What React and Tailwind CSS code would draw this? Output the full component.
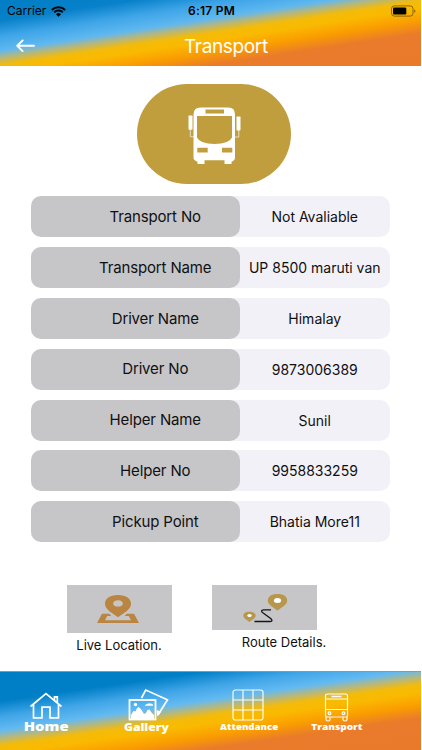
const details = [
  { label: "Transport No", value: "Not Avaliable" },
  { label: "Transport Name", value: "UP 8500 maruti van" },
  { label: "Driver Name", value: "Himalay" },
  { label: "Driver No", value: "9873006389" },
  { label: "Helper Name", value: "Sunil" },
  { label: "Helper No", value: "9958833259" },
  { label: "Pickup Point", value: "Bhatia More11" },
];

function StatusBar() {
  return (
    <div className="flex h-[22px] items-center justify-between pl-[7px] pr-[5px] text-black">
      <div className="flex w-[120px] items-center gap-[4.5px]">
        <span className="text-[12px] leading-none">Carrier</span>
        <svg className="h-[11px] w-[15px]" viewBox="0 0 15 11" fill="none" stroke="currentColor">
          <path d="M0.8 3.9a9.6 9.6 0 0 1 13.4 0" strokeWidth="2.1" />
          <path d="M3.2 6.3a6.1 6.1 0 0 1 8.6 0" strokeWidth="2" />
          <path d="M7.5 10.8L5 8.2a3.6 3.6 0 0 1 5 0z" fill="currentColor" stroke="none" />
        </svg>
      </div>
      <span className="text-[12px] font-semibold leading-none tracking-[0.25px]">6:17 PM</span>
      <div className="flex w-[120px] justify-end">
        <svg className="h-[12px] w-[25px]" viewBox="0 0 25 12" fill="none">
          <rect x="0.5" y="0.9" width="21.5" height="10.2" rx="2.8" stroke="#4d3c05" strokeOpacity=".65" />
          <rect x="2" y="2.4" width="13.3" height="7.2" rx="1.3" fill="#000" />
          <path d="M23.2 4.2c1.6.5 1.6 3.1 0 3.6z" fill="#4d3c05" fillOpacity=".65" />
        </svg>
      </div>
    </div>
  );
}

function Header() {
  return (
    <header className="h-[66px] w-[421px] bg-[linear-gradient(171.3deg,#007ec5_0%,#0881ca_16%,#3fa5e8_28%,#60b8ef_39%,#b0b784_44%,#f4bb08_50%,#fab900_56%,#fa9d00_65%,#e97b2b_75%,#e97a2b_100%)]">
      <StatusBar />
      <div className="flex h-11 items-center pl-4 text-white">
        <svg className="mt-[3.5px] h-[14px] w-[19px]" viewBox="0 0 19 14" fill="none" stroke="currentColor" strokeWidth="1.9" strokeLinecap="round" strokeLinejoin="round">
          <path d="M18 6.8H1.2M6.6 1.5L1.2 6.8l5.4 5.3" />
        </svg>
        <h1 className="ml-[149px] mt-[5px] text-[19px] font-normal leading-none tracking-[-0.35px]">Transport</h1>
      </div>
    </header>
  );
}

function BusBadge() {
  return (
    <div className="mx-auto flex h-[100px] w-[154px] items-center justify-center rounded-[50px] bg-[#c09d3d]">
      <svg className="mt-[4px] h-[57px] w-[54px]" viewBox="0 0 54 57">
        <path
          fill="#fff"
          fillRule="evenodd"
          d="M13.5.5h28q6.5 0 6.5 7v43q0 3-3.5 4.2V57h-7v-3.8H17.500V57h-7v-2.300Q6.500 53.500 6.500 50.500v-43Q6.500.5 13.500.5zM18.500 2.500v4h18.500v-4zM10 9v21.500Q13 37 27.500 37T45 30.500V9zM10.300 40.800v4.700h10.400v-4.700zM35 40.800v4.700h10.300v-4.700z"
        />
        <rect x="1.5" y="8.5" width="4" height="14.3" rx=".7" fill="#fff" />
        <rect x="49.5" y="9.5" width="4" height="14" rx=".7" fill="#fff" />
        <path d="M3.3 22.5v7.3h3.5M51.8 23v7h-4" stroke="#fff" strokeOpacity=".65" fill="none" strokeWidth="1" />
      </svg>
    </div>
  );
}

function DetailRow({ label, value }) {
  return (
    <div className="flex h-[41px] rounded-[10px] bg-[#f2f1f8] text-[#101012]">
      <div className="flex w-[208.5px] items-center justify-center rounded-[10px] bg-[#c6c6c8] pl-10 pt-px text-[15px] tracking-[-0.15px]">
        {label}
      </div>
      <div className="flex flex-1 items-center justify-center whitespace-nowrap text-[14px]">{value}</div>
    </div>
  );
}

function LiveLocationIcon() {
  return (
    <svg className="-mt-px h-[30px] w-[44px]" viewBox="0 0 44 30" fill="#b98540">
      <path fillRule="evenodd" d="M22 1C13.500 1 9 4.700 9 10c0 5.200 7.500 9.500 13 13.200C27.500 19.500 35 15.200 35 10c0-5.300-4.500-9-13-9zM22 6.200c3 0 4.900 1.300 4.900 3.200S25 12.600 22 12.600s-4.900-1.300-4.900-3.200S19 6.200 22 6.200z" />
      <path fillRule="evenodd" d="M6 19.700h7.300l2 2.200H11.200L9 26.200h26l-2.200-4.300h-4.100l2-2.200H38L43 29H1z" />
    </svg>
  );
}

function RouteIcon() {
  return (
    <svg className="h-[30px] w-[46px]" viewBox="0 0 46 30">
      <path d="M6.500 18.700c4 0 6.200 1.600 6.200 4.100 0 2.300-3.700 4.500-6.200 6.200C4 27.300.300 25.100.300 22.800c0-2.500 2.200-4.100 6.200-4.100z" fill="#b6974b" />
      <ellipse cx="6.5" cy="22.6" rx="2.2" ry="1.5" fill="#fff" />
      <path d="M34.500 1c6.300 0 9.700 2.600 9.700 6.700 0 3.800-5.700 6.700-9.700 9.800-4-3.100-9.700-6-9.700-9.800C24.800 3.600 28.200 1 34.500 1z" fill="#b6974b" />
      <ellipse cx="34.5" cy="7.500" rx="3.6" ry="2.5" fill="#fff" />
      <path d="M28 16.800h-7.500q-3.300.5-1 2.700l8.500 6.300q2.300 2.500-.8 2.700H11.500" fill="none" stroke="#161616" strokeWidth="1.3" />
    </svg>
  );
}

function HomeIcon() {
  return (
    <svg className="h-[27px] w-[34px]" viewBox="0 0 34 27" fill="none" stroke="#fff" strokeWidth="1.7">
      <path d="M1.500 14.500L17 1.500l15.500 13M4.500 12.500V25.800H13V15.200h8v10.600h8.500V12.500M25.500 8V4.800h2.800v5.500" />
    </svg>
  );
}

function GalleryIcon() {
  return (
    <svg className="h-[33px] w-[41px]" viewBox="0 0 41 33" fill="none" stroke="#fff">
      <path d="M13.500 10L17.700 2 39.500 11.800 30 27" strokeWidth="1.7" />
      <path d="M28.500 22.500h2l2.300 1.500-3.500 4.500z" fill="#fff" stroke="none" />
      <rect x="1.500" y="12" width="26" height="19.500" strokeWidth="1.8" />
      <circle cx="7.500" cy="16.500" r="1.7" fill="#fff" stroke="none" />
      <path d="M17 17l3-1.500h3l2 1v1.200h-8z" fill="#fff" stroke="none" />
      <path d="M3 31v-4l2.500-4 2 .5 1.200-3 2-1.500 2.500 2.500L16 26l2-1 1.500-3 2-.5 2 3L26 27v4z" fill="#fff" stroke="none" />
    </svg>
  );
}

function AttendanceIcon() {
  return (
    <svg className="h-[32px] w-[32px]" viewBox="0 0 32 32" fill="none" stroke="#fff" strokeOpacity=".95" strokeWidth="1.2">
      <rect x="1" y="1" width="30" height="30" rx="2.5" />
      <path d="M11 1v30M21 1v30M1 11h30M1 21h30" />
    </svg>
  );
}

function TransportIcon() {
  return (
    <svg className="h-[29px] w-[25px]" viewBox="0 0 25 29" fill="none" stroke="#fff" strokeOpacity=".95" strokeWidth="1.2">
      <path d="M3.500 1h18q2 0 2 2v19.500q0 1.500-1.500 1.500H3q-1.500 0-1.500-1.500V3q0-2 2-2zM1.500 6h22M1.500 16.500h22M2 24v2.500q0 1.500 2 1.500t2-1.500V24M19 24v2.500q0 1.500 2 1.500t2-1.500V24" />
      <path d="M7.500 3.500h10" strokeWidth="1.5" />
      <circle cx="5.500" cy="20.300" r="1.4" />
      <circle cx="19.500" cy="20.300" r="1.4" />
    </svg>
  );
}

function NavBar() {
  return (
    <nav className="mt-auto flex h-[79px] w-[421px] border-t border-[#57aacd] bg-[linear-gradient(171.7deg,#007ec5_0%,#007fc7_21%,#40a5e7_32%,#64baf1_42%,#bab876_48%,#f4bb08_53%,#fab900_59%,#fa9d00_68%,#e97b2b_77%,#e97a2b_100%)] font-['Open_Sans',sans-serif] font-extrabold text-white">
      <a className="flex w-[93px] flex-col items-center pt-5">
        <span className="-ml-px"><HomeIcon /></span>
        <span className="scale-x-[1.24] text-[12px] leading-[15px]">Home</span>
      </a>
      <a className="flex w-[105px] flex-col items-center pt-[16px]">
        <span className="ml-[6px]"><GalleryIcon /></span>
        <span className="-mt-[2px] ml-px scale-x-[1.1] text-[11px] leading-[15px]">Gallery</span>
      </a>
      <a className="flex w-[101px] flex-col items-center pt-[17px]">
        <span className="-ml-[2px]"><AttendanceIcon /></span>
        <span className="-mt-px ml-px scale-x-[1.07] text-[9px] leading-[14px]">Attendance</span>
      </a>
      <a className="flex w-[76px] flex-col items-center pt-[21px]">
        <span className="-ml-[2px]"><TransportIcon /></span>
        <span className="-mt-[2px] scale-x-[1.12] text-[9px] leading-[14px]">Transport</span>
      </a>
    </nav>
  );
}

export default function App() {
  return (
    <div className="flex h-[750px] w-[422px] flex-col overflow-hidden bg-white font-['Inter',sans-serif]">
      <Header />
      <main className="flex flex-col pt-[17.5px]">
        <div className="w-[427px]">
          <BusBadge />
        </div>
        <div className="ml-[31px] mt-[12.5px] flex w-[359px] flex-col gap-[9.9px]">
          {details.map((item) => (
            <DetailRow key={item.label} label={item.label} value={item.value} />
          ))}
        </div>
        <div className="mt-[43px] flex gap-[40.5px] pl-[66.5px] text-[13px] text-[#101012]">
          <button className="flex w-[105px] flex-col items-center">
            <span className="flex h-[47.5px] w-full items-center justify-center bg-[#c6c6c8] pr-[3px]">
              <LiveLocationIcon />
            </span>
            <span className="mt-[3px] leading-[18px]">Live Location.</span>
          </button>
          <button className="flex w-[105px] flex-col items-center">
            <span className="flex h-[44.5px] w-full items-center justify-center bg-[#c6c6c8] pl-[2px]">
              <RouteIcon />
            </span>
            <span className="ml-[39px] mt-[3px] whitespace-nowrap leading-[18px]">Route Details.</span>
          </button>
        </div>
      </main>
      <NavBar />
    </div>
  );
}
